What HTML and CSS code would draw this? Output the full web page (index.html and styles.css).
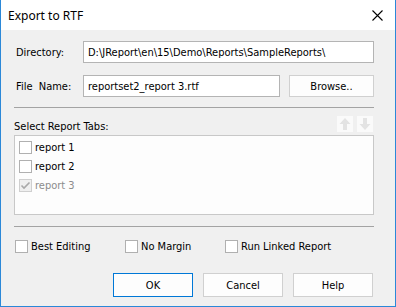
FILE: index.html
```html
<!DOCTYPE html>
<html lang="en">
<head>
    <meta charset="UTF-8">
    <title>Export to RTF</title>
    <link rel="stylesheet" href="styles.css">
</head>
<body>
    <div class="dialog">
        <div class="titlebar">
            <span class="title">Export to RTF</span>
            <svg class="close" width="11" height="11" viewBox="0 0 11 11">
                <path d="M0.5 0.5 L10.5 10.5 M10.5 0.5 L0.5 10.5" stroke="#000" stroke-width="1.1" fill="none"/>
            </svg>
        </div>
        <div class="content">
            <div class="field-row">
                <label class="field-label">Directory:</label>
                <div class="text-box dir-box">D:\JReport\en\15\Demo\Reports\SampleReports\</div>
            </div>
            <div class="field-row second">
                <label class="field-label">File&nbsp; Name:</label>
                <div class="text-box file-box">reportset2_report 3.rtf</div>
                <button class="btn browse">Browse..</button>
            </div>
            <div class="separator sep-top"></div>

            <div class="tabs-header">
                <span>Select Report Tabs:</span>
                <div class="move-buttons">
                    <svg class="move" width="16" height="16" viewBox="0 0 16 16">
                        <rect width="16" height="16" fill="#fafafa"/>
                        <path d="M8 2 L2.5 8 L6 8 L6 14 L10 14 L10 8 L13.5 8 Z" fill="#e3e3e3"/>
                    </svg>
                    <svg class="move" width="16" height="16" viewBox="0 0 16 16">
                        <rect width="16" height="16" fill="#fafafa"/>
                        <path d="M8 14 L2.5 8 L6 8 L6 2 L10 2 L10 8 L13.5 8 Z" fill="#e3e3e3"/>
                    </svg>
                </div>
            </div>
            <div class="tab-list">
                <div class="tab-item"><span class="check"></span>report 1</div>
                <div class="tab-item"><span class="check"></span>report 2</div>
                <div class="tab-item disabled">
                    <span class="check">
                        <svg width="11" height="11" viewBox="0 0 11 11">
                            <path d="M1.5 5.5 L4 8 L9.5 2.5" stroke="#a8a8a8" stroke-width="1.6" fill="none"/>
                        </svg>
                    </span>report 3
                </div>
            </div>
            <div class="separator sep-bottom"></div>

            <div class="options">
                <div class="option opt-best"><span class="check"></span>Best Editing</div>
                <div class="option opt-margin"><span class="check"></span>No Margin</div>
                <div class="option"><span class="check"></span>Run Linked Report</div>
            </div>

            <div class="actions">
                <button class="btn action default">OK</button>
                <button class="btn action">Cancel</button>
                <button class="btn action">Help</button>
            </div>
        </div>
    </div>
</body>
</html>
```

FILE: styles.css
```css
* {
    margin: 0;
    padding: 0;
    box-sizing: border-box;
}

body {
    background-color: #fff;
    font-family: "DejaVu Sans Condensed", "DejaVu Sans", sans-serif;
    font-size: 11px;
    color: #000;
}

.dialog {
    width: 396px;
    height: 307px;
    border: 1px solid #2b88d8;
    border-top: none;
    background-color: #f0f0f0;
    display: flex;
    flex-direction: column;
}

.titlebar {
    height: 30px;
    background-color: #fff;
    display: flex;
    align-items: center;
    justify-content: space-between;
    padding: 0 12px 0 7px;
}

.title {
    font-family: "Noto Sans", sans-serif;
    font-size: 12px;
}

.close {
    display: block;
}

.content {
    padding: 11px 20px 0 13px;
    display: flex;
    flex-direction: column;
}

.field-row {
    display: flex;
    align-items: center;
    height: 22px;
}

.field-row.second {
    margin-top: 12px;
}

.field-label {
    width: 69px;
    padding-left: 2px;
}

.text-box {
    height: 22px;
    background-color: #fff;
    border: 1px solid #b4b4b4;
    padding: 0 4px;
    display: flex;
    align-items: center;
    white-space: nowrap;
}

.dir-box {
    width: 291px;
}

.file-box {
    width: 197px;
}

.btn {
    font-family: inherit;
    font-size: 11px;
    color: #000;
    background-color: #fdfdfd;
    border: 1px solid #d0d0d0;
}

.browse {
    width: 85px;
    height: 22px;
    margin-left: 9px;
}

.separator {
    height: 1px;
    background-color: #a3a3a3;
    width: 360px;
}

.sep-top {
    margin-top: 10px;
}

.tabs-header {
    margin-top: 8px;
    height: 16px;
    display: flex;
    align-items: center;
    justify-content: space-between;
    width: 360px;
}

.tabs-header span {
    padding-top: 4px;
}

.move-buttons {
    display: flex;
    gap: 4px;
    padding-right: 1px;
}

.move {
    display: block;
}

.tab-list {
    margin-top: 3px;
    width: 360px;
    height: 80px;
    background-color: #fdfdfd;
    border: 1px solid #c8c8c8;
    padding: 2px 4px;
}

.tab-item {
    height: 19px;
    display: flex;
    align-items: center;
}

.check {
    width: 13px;
    height: 13px;
    border: 1px solid #b0b0b0;
    background-color: #fff;
    margin-right: 3px;
    display: flex;
    align-items: center;
    justify-content: center;
}

.tab-item.disabled {
    color: #8c8c8c;
}

.tab-item.disabled .check {
    border-color: #cfcfcf;
    background-color: #efefef;
}

.sep-bottom {
    margin-top: 11px;
}

.options {
    margin-top: 13px;
    height: 13px;
    display: flex;
    align-items: center;
    padding-left: 1px;
}

.option {
    display: flex;
    align-items: center;
}

.opt-best {
    width: 110px;
}

.opt-margin {
    width: 100px;
}

.actions {
    margin-top: 20px;
    width: 360px;
    display: flex;
    justify-content: flex-end;
    gap: 10px;
    padding-right: 1px;
}

.action {
    width: 80px;
    height: 24px;
}

.action.default {
    border-color: #0078d7;
}
```
